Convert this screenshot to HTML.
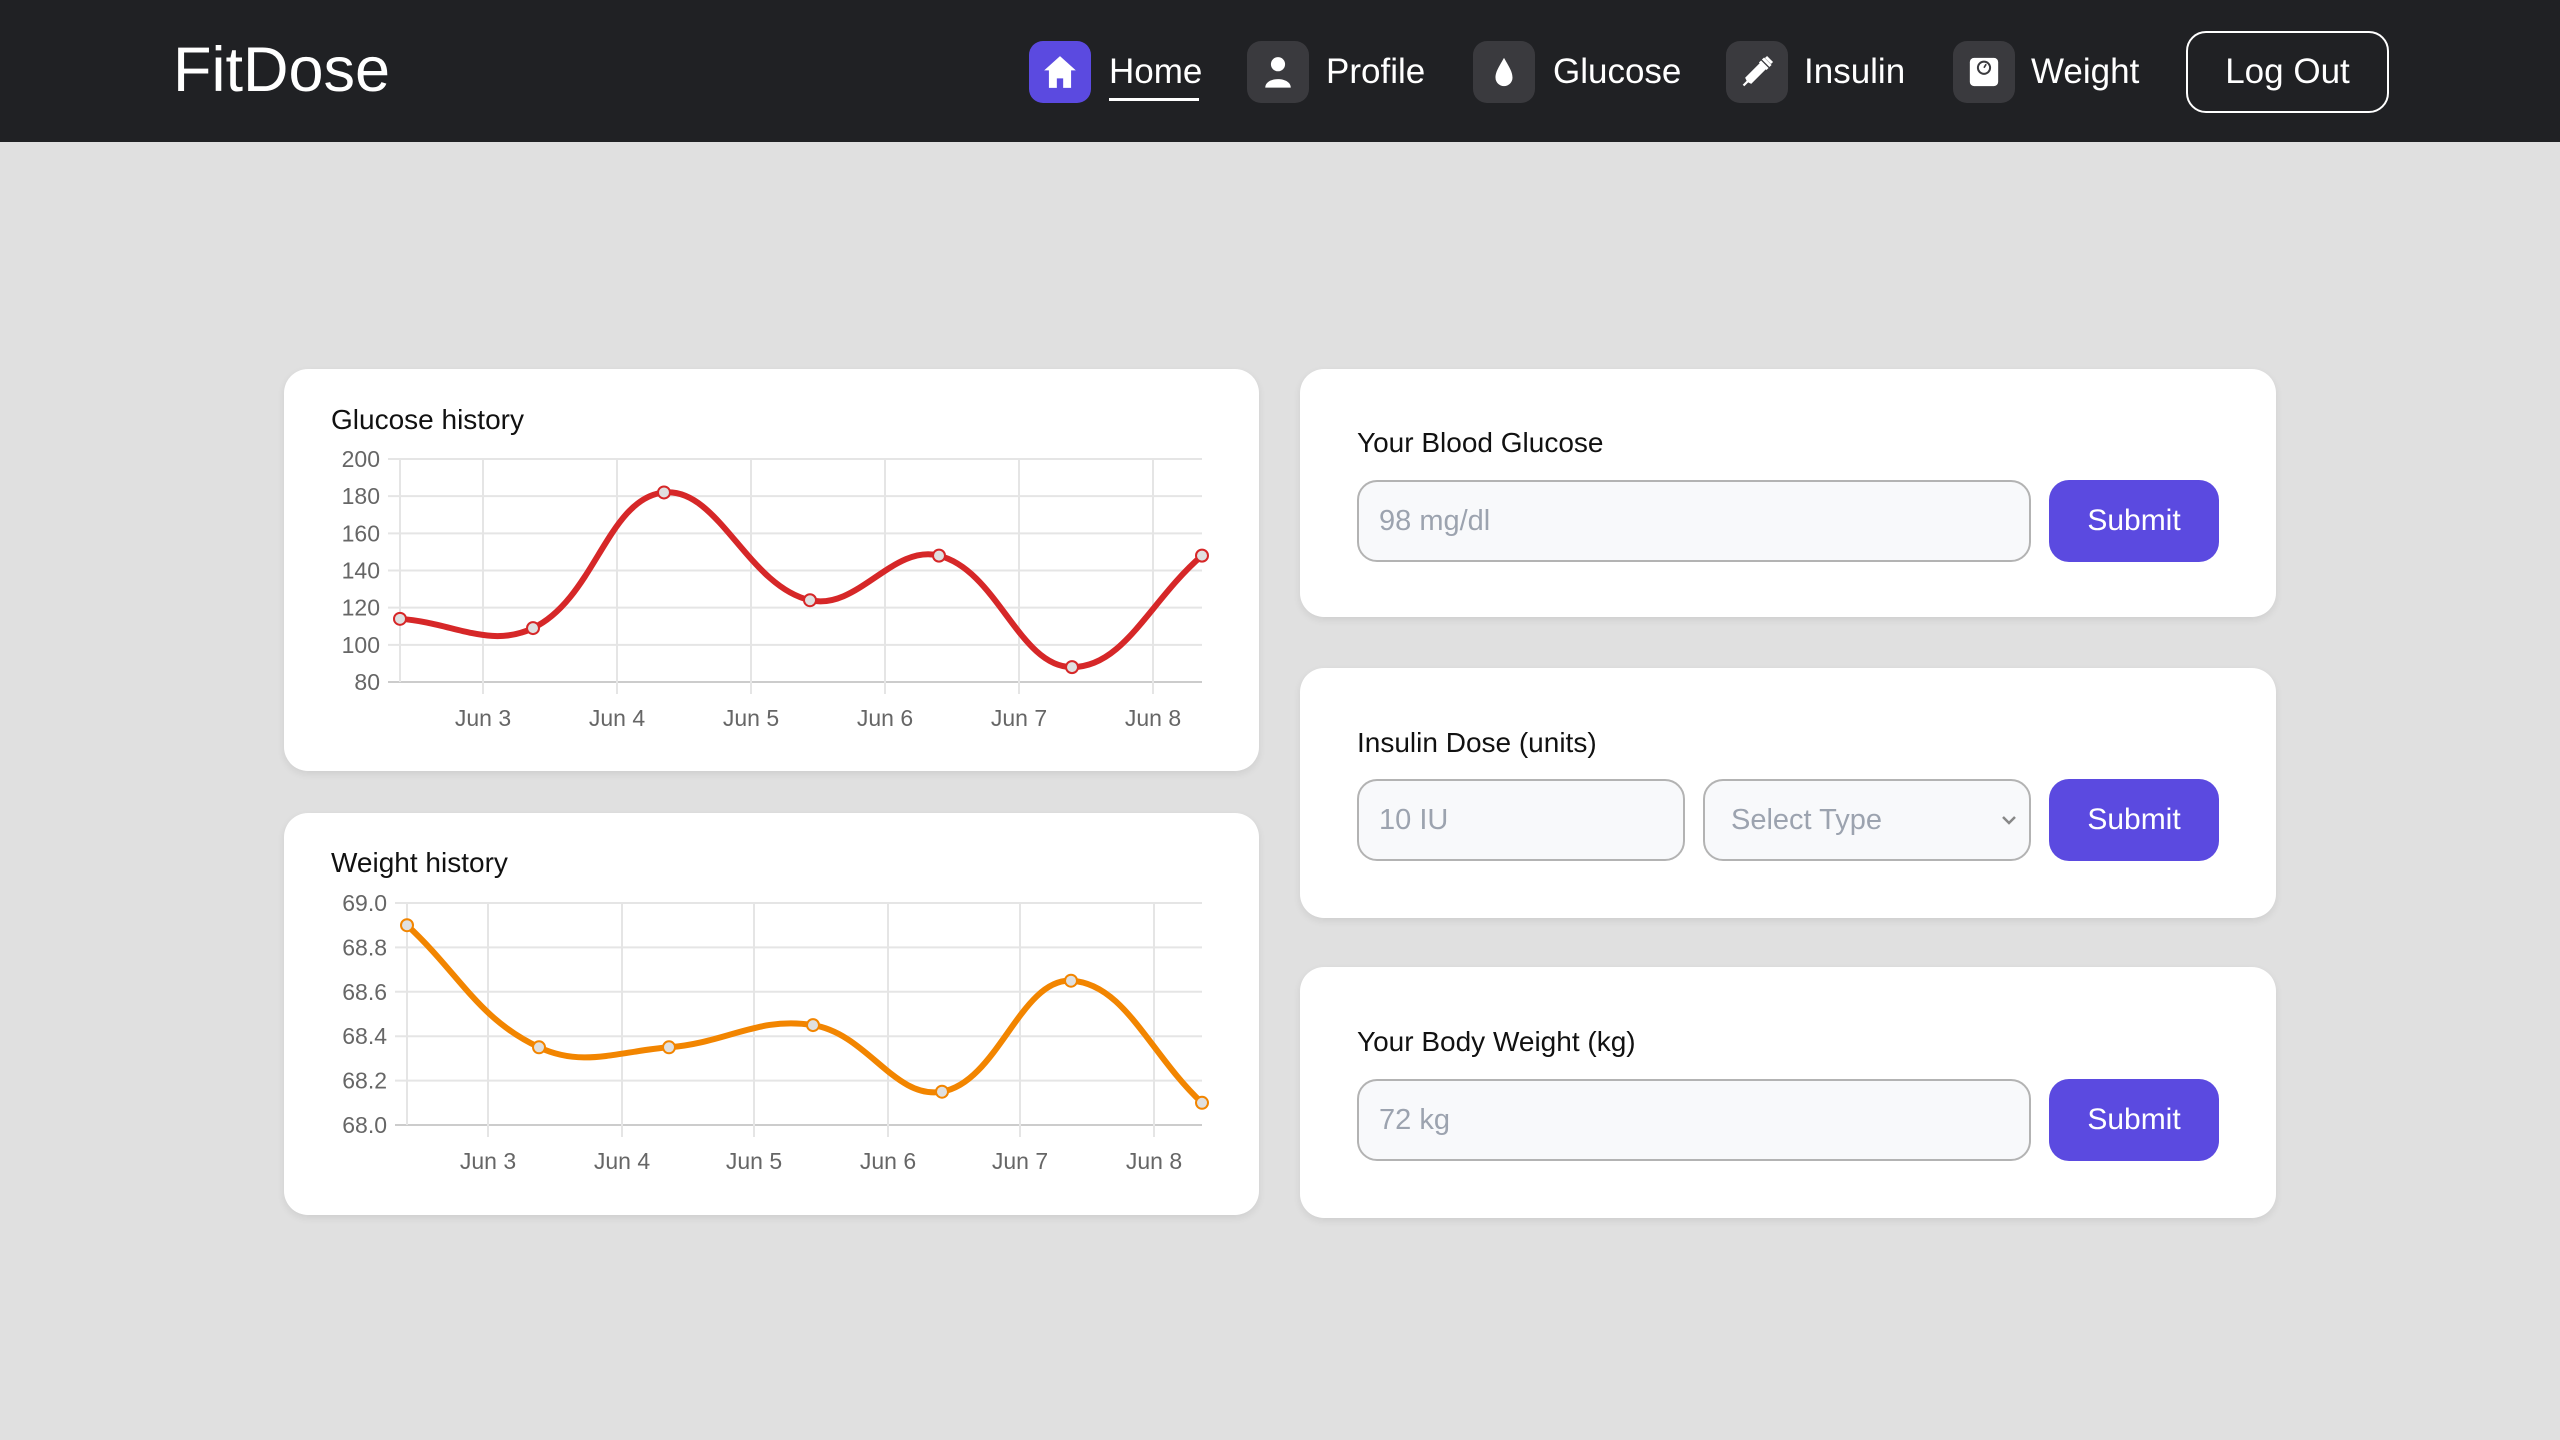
<!DOCTYPE html>
<html><head><meta charset="utf-8"><style>
*{box-sizing:border-box;margin:0;padding:0}
body{width:2560px;height:1440px;background:#e0e0e0;font-family:"Liberation Sans",sans-serif;position:relative;overflow:hidden}
.hdr{position:absolute;left:0;top:0;width:2560px;height:142px;background:#202124}
.logo{position:absolute;left:173px;top:34px;font-size:63px;color:#fff;font-weight:500}
.ib{position:absolute;top:41px;width:62px;height:62px;border-radius:14px;background:#3a3a3e;display:flex;align-items:center;justify-content:center}
.nt{position:absolute;top:50px;font-size:35px;color:#fff;line-height:44px}
.lo{position:absolute;left:2186px;top:31px;width:203px;height:82px;border:2px solid #fff;border-radius:20px;color:#fff;font-size:35px;display:flex;align-items:center;justify-content:center}
.card{position:absolute;background:#fff;border-radius:24px;box-shadow:0 3px 8px rgba(0,0,0,.08)}
.ct{position:absolute;font-size:28px;color:#111}
.lbl{position:absolute;font-size:28px;color:#111}
.inp{position:absolute;height:82px;border:2px solid #b3b3b3;border-radius:20px;background:#f8f9fb;color:#9ca3af;font-size:29px;padding-left:20px;display:flex;align-items:center}
.btn{position:absolute;left:2049px;width:170px;height:82px;border-radius:20px;background:#5b4ae0;color:#fff;font-size:30px;font-weight:500;display:flex;align-items:center;justify-content:center}
svg text{font-family:"Liberation Sans",sans-serif;font-size:23px;fill:#666}
</style></head><body>
<div class="hdr">
<div class="logo">FitDose</div>
<div class="ib" style="left:1029px;background:#5b4ae0"><svg width="38" height="38" viewBox="0 0 24 24"><path d="M12 2 L2 11 H5 V22 H10 V16 H14 V22 H19 V11 H22 Z" fill="#fff"/></svg></div>
<div class="nt" style="left:1109px">Home</div>
<div style="position:absolute;left:1109px;top:98px;width:90px;height:3px;background:#fff"></div>
<div class="ib" style="left:1247px"><svg width="34" height="34" viewBox="0 0 24 24"><circle cx="12" cy="6.5" r="5" fill="#fff"/><path d="M3 23 C3 15 21 15 21 23 Z" fill="#fff"/></svg></div>
<div class="nt" style="left:1326px">Profile</div>
<div class="ib" style="left:1473px"><svg width="34" height="34" viewBox="0 0 24 24"><path d="M12 2 C8 9 6 12 6 16 A6 6 0 0 0 18 16 C18 12 16 9 12 2Z" fill="#fff"/></svg></div>
<div class="nt" style="left:1553px">Glucose</div>
<div class="ib" style="left:1726px"><svg width="36" height="36" viewBox="0 0 24 24"><path d="M3 21 L6 18 L5 16 L15 6 L18 9 L8 19 L6 18" fill="#fff" stroke="#fff" stroke-width="1.5"/><path d="M14 5 L19 10 M16 3 L21 8 M18 2 L22 6" stroke="#fff" stroke-width="2"/></svg></div>
<div class="nt" style="left:1804px">Insulin</div>
<div class="ib" style="left:1953px"><svg width="34" height="34" viewBox="0 0 24 24"><rect x="2" y="2" width="20" height="20" rx="3" fill="#fff"/><circle cx="12" cy="9" r="5" fill="#3a3a3e"/><circle cx="12" cy="9" r="3.6" fill="#fff"/><path d="M12 9 L13.5 6.5" stroke="#3a3a3e" stroke-width="1.2"/></svg></div>
<div class="nt" style="left:2031px">Weight</div>
<div class="lo">Log Out</div>
</div>

<div class="card" style="left:284px;top:369px;width:975px;height:402px"></div>
<div class="card" style="left:284px;top:813px;width:975px;height:402px"></div>
<div class="ct" style="left:331px;top:404px">Glucose history</div>
<div class="ct" style="left:331px;top:847px">Weight history</div>

<div class="card" style="left:1300px;top:369px;width:976px;height:248px"></div>
<div class="card" style="left:1300px;top:668px;width:976px;height:250px"></div>
<div class="card" style="left:1300px;top:967px;width:976px;height:251px"></div>

<div class="lbl" style="left:1357px;top:427px">Your Blood Glucose</div>
<div class="inp" style="left:1357px;top:480px;width:674px">98 mg/dl</div>
<div class="btn" style="top:480px">Submit</div>

<div class="lbl" style="left:1357px;top:727px">Insulin Dose (units)</div>
<div class="inp" style="left:1357px;top:779px;width:328px">10 IU</div>
<div class="inp" style="left:1703px;top:779px;width:328px;padding-left:26px">Select Type<svg style="position:absolute;right:12px;top:34px" width="16" height="10" viewBox="0 0 16 10"><path d="M2 2 L8 8 L14 2" stroke="#888" stroke-width="2.5" fill="none"/></svg></div>
<div class="btn" style="top:779px">Submit</div>

<div class="lbl" style="left:1357px;top:1026px">Your Body Weight (kg)</div>
<div class="inp" style="left:1357px;top:1079px;width:674px">72 kg</div>
<div class="btn" style="top:1079px">Submit</div>

<svg id="ch" style="position:absolute;left:0;top:0" width="2560" height="1440"></svg>
<script>
var NS="http://www.w3.org/2000/svg",svg=document.getElementById('ch');
function el(t,a,txt){var e=document.createElementNS(NS,t);for(var k in a)e.setAttribute(k,a[k]);if(txt!==undefined)e.textContent=txt;svg.appendChild(e);return e;}
function chart(o){
 var n=o.ylab.length;
 for(var i=0;i<n;i++){var y=o.top+(o.bot-o.top)*i/(n-1);
  el('line',{x1:o.ax-12,x2:o.right,y1:y,y2:y,stroke:i==n-1?'#ccc':'#e5e5e5','stroke-width':2});
  el('text',{x:o.ax-20,y:y+8,'text-anchor':'end'},o.ylab[i]);}
 el('line',{x1:o.ax,x2:o.ax,y1:o.top,y2:o.bot,stroke:'#e5e5e5','stroke-width':2});
 o.vx.forEach(function(x,i){el('line',{x1:x,x2:x,y1:o.top,y2:o.bot+12,stroke:'#e5e5e5','stroke-width':2});
  el('text',{x:x,y:o.bot+44,'text-anchor':'middle'},'Jun '+(i+3));});
 var P=o.px.map(function(x,i){return [x,o.bot-(o.v[i]-o.min)/(o.max-o.min)*(o.bot-o.top)];});
 var t=0.4,d='M'+P[0][0]+' '+P[0][1],cps=[];
 for(var i=0;i<P.length;i++){var p=P[i-1]||P[i],c=P[i],nx=P[i+1]||P[i];
  var d01=Math.hypot(c[0]-p[0],c[1]-p[1]),d12=Math.hypot(nx[0]-c[0],nx[1]-c[1]),s=d01+d12||1;
  var fa=t*d01/s,fb=t*d12/s;
  cps.push([[c[0]-fa*(nx[0]-p[0]),c[1]-fa*(nx[1]-p[1])],[c[0]+fb*(nx[0]-p[0]),c[1]+fb*(nx[1]-p[1])]]);}
 for(var i=1;i<P.length;i++){d+=' C'+cps[i-1][1].join(' ')+' '+cps[i][0].join(' ')+' '+P[i].join(' ');}
 el('path',{d:d,fill:'none',stroke:o.col,'stroke-width':6});
 P.forEach(function(p){el('circle',{cx:p[0],cy:p[1],r:6,fill:'#e0e0e0',stroke:o.col,'stroke-width':2});});
}
chart({ax:400,right:1202,top:459,bot:682,ylab:['200','180','160','140','120','100','80'],min:80,max:200,
 vx:[483,617,751,885,1019,1153],px:[400,533,664,810,939,1072,1202],v:[114,109,182,124,148,88,148],col:'#d62728'});
chart({ax:407,right:1202,top:903,bot:1125,ylab:['69.0','68.8','68.6','68.4','68.2','68.0'],min:68,max:69,
 vx:[488,622,754,888,1020,1154],px:[407,539,669,813,942,1071,1202],v:[68.9,68.35,68.35,68.45,68.15,68.65,68.1],col:'#f28500'});
</script>
</body></html>
